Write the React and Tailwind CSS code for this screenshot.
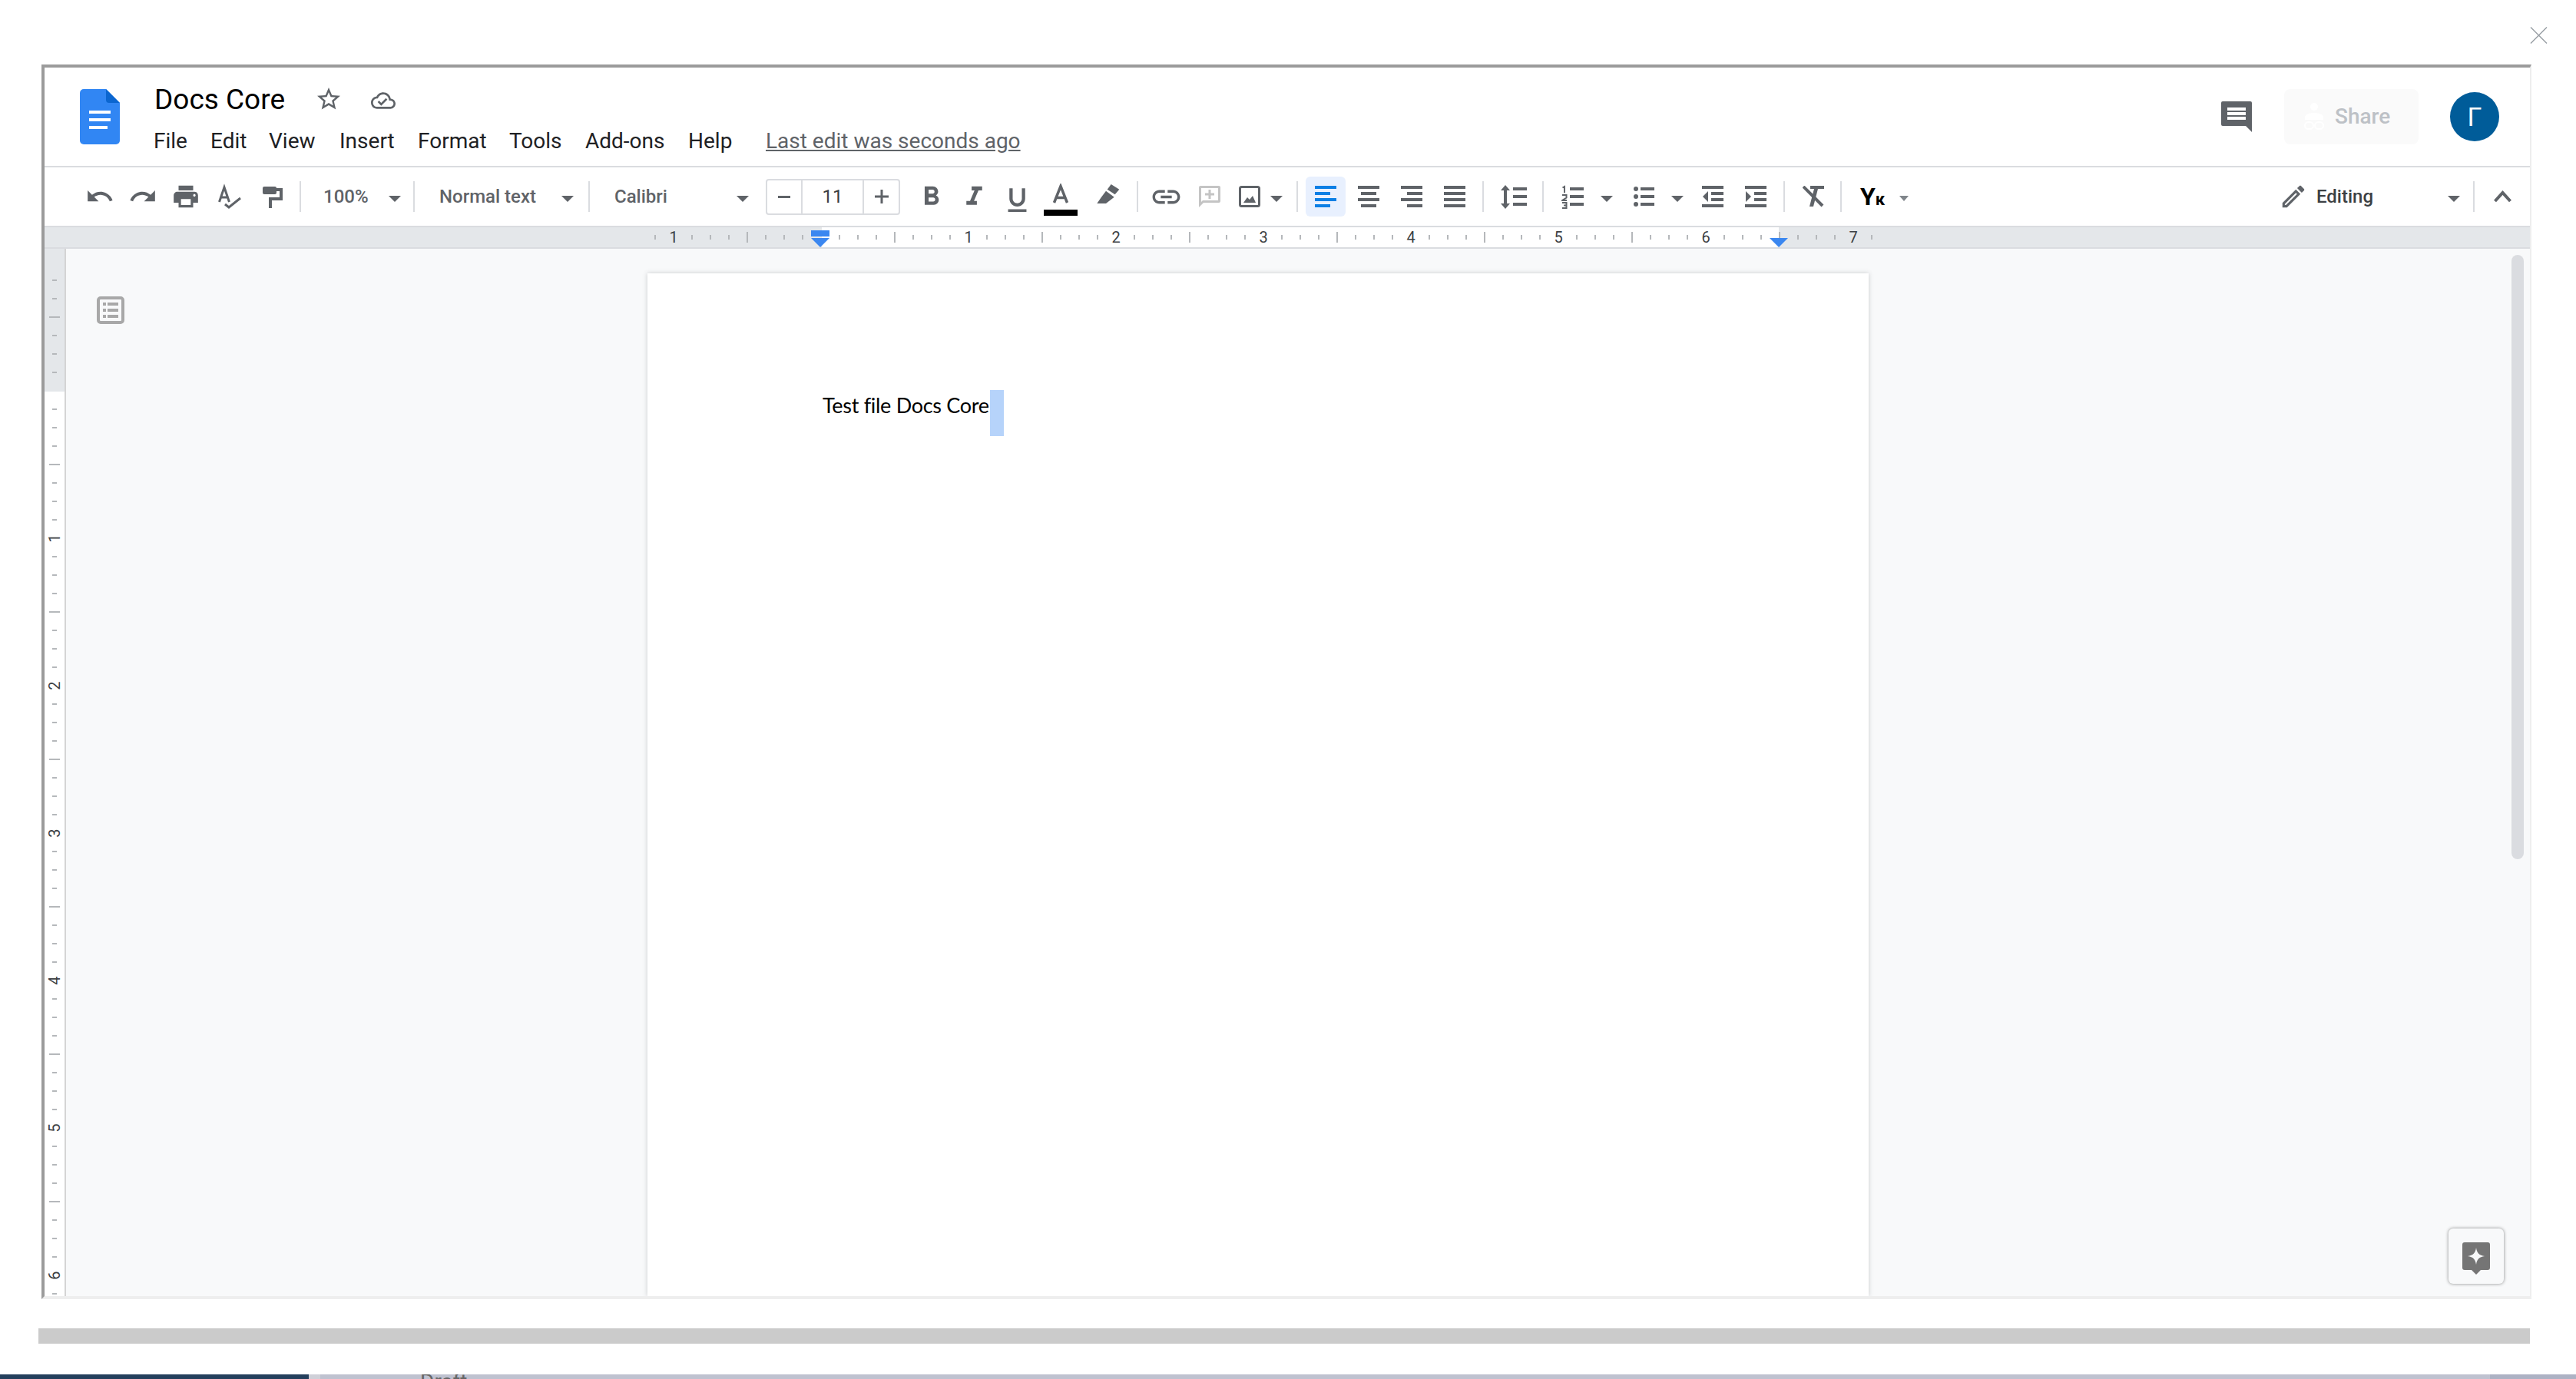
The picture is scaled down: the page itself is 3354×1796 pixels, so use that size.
import React from "react";

const GRAY = "#5f6368";

// generic filled icon, d comes from a 24 unit grid unless a box is given
const Icon = ({ d, size = 38, box = 24, color = GRAY, className = "" }) => (
  <svg width={size} height={size} viewBox={`0 0 ${box} ${box}`} className={`shrink-0 ${className}`}>
    <path d={d} fill={color} fillRule="evenodd" />
  </svg>
);

const Arrow = ({ className = "" }) => (
  <svg width="16" height="8" viewBox="0 0 16 8" className={`shrink-0 ${className}`}>
    <polygon points="0,0 16,0 8,8" fill={GRAY} />
  </svg>
);

const Sep = ({ className = "" }) => <div className={`w-[2px] h-[40px] bg-[#dadce0] shrink-0 ${className}`} />;

const Cell = ({ className = "", children }) => (
  <div className={`flex items-center justify-center shrink-0 ${className}`}>{children}</div>
);

const Combo = ({ label, className = "" }) => (
  <div className={`flex items-center justify-between shrink-0 text-[24px] font-medium text-[#5f6368] ${className}`}>
    <span>{label}</span>
    <Arrow className="mt-[5px]" />
  </div>
);

const AlignIcon = ({ rows, color = GRAY }) => (
  <svg width="28" height="28" viewBox="0 0 28 28">
    {rows.map((r, i) => (
      <rect key={i} x={r[0]} y={i * 8} width={r[1]} height="4" fill={color} />
    ))}
  </svg>
);

const IndentIcon = ({ more, className = "" }) => (
  <svg width="28" height="28" viewBox="0 0 28 28" className={`shrink-0 ${className}`}>
    <rect x="0" y="0" width="28" height="4" fill={GRAY} />
    <rect x="12" y="8" width="16" height="4" fill={GRAY} />
    <rect x="12" y="16" width="16" height="4" fill={GRAY} />
    <rect x="0" y="24" width="28" height="4" fill={GRAY} />
    <polygon points={more ? "1,7 1,21 8,14" : "8,7 8,21 1,14"} fill={GRAY} />
  </svg>
);

const menuItems = [
  ["File", "w-[74px]"],
  ["Edit", "w-[76px]"],
  ["View", "w-[92px]"],
  ["Insert", "w-[102px]"],
  ["Format", "w-[119px]"],
  ["Tools", "w-[99px]"],
  ["Add-ons", "w-[134px]"],
  ["Help", "w-[101px]"],
];

const Header = () => (
  <div className="flex h-[130px] shrink-0 border-b-2 border-[#dadce0] bg-white">
    <svg width="52" height="72" viewBox="0 0 52 72" className="ml-[46px] mt-[28px] shrink-0">
      <path d="M5 0H34L52 18V67a5 5 0 0 1-5 5H5a5 5 0 0 1-5-5V5a5 5 0 0 1 5-5Z" fill="#3186f3" />
      <path d="M34 0L52 18H38a4 4 0 0 1-4-4Z" fill="#0b66d0" />
      <rect x="12" y="28" width="28" height="4" fill="#fff" />
      <rect x="12" y="38" width="28" height="4" fill="#fff" />
      <rect x="12" y="48" width="24" height="4" fill="#fff" />
    </svg>
    <div className="ml-[44px] flex flex-col">
      <div className="flex items-center h-[40px] mt-[22px]">
        <span className="text-[37px] leading-[40px] text-black w-[209px] ml-[1px]">Docs Core</span>
        <Icon
          size={36}
          className="-mt-[2px]"
          d="M22 9.24l-7.19-.62L12 2 9.19 8.63 2 9.24l5.46 4.73L5.82 21 12 17.27 18.18 21l-1.63-7.03L22 9.24zM12 15.4l-3.76 2.27 1-4.28-3.32-2.88 4.38-.38L12 6.1l1.71 4.04 4.38.38-3.32 2.88 1 4.28L12 15.4z"
        />
        <Icon
          size={32}
          className="ml-[37px] mt-[2px]"
          d="M19.35 10.04C18.67 6.59 15.64 4 12 4 9.11 4 6.6 5.64 5.35 8.04 2.34 8.36 0 10.91 0 14c0 3.31 2.69 6 6 6h13c2.76 0 5-2.24 5-5 0-2.64-2.05-4.78-4.65-4.96zM19 18H6c-2.21 0-4-1.79-4-4 0-2.05 1.53-3.76 3.56-3.97l1.07-.11.5-.95C8.08 7.14 9.94 6 12 6c2.62 0 4.88 1.86 5.39 4.43l.3 1.5 1.53.11c1.56.1 2.78 1.41 2.78 2.96 0 1.65-1.35 3-3 3zm-9-3.82l-2.09-2.09L6.5 13.5 10 17l6.01-6.01-1.41-1.41z"
        />
      </div>
      <div className="flex items-center h-[36px] mt-[16px] text-[28px] leading-[36px] text-[#202124]">
        {menuItems.map(([name, width]) => (
          <span key={name} className={`${width} shrink-0`}>
            {name}
          </span>
        ))}
        <span className="underline text-[#5f6368] text-[28px]">Last edit was seconds ago</span>
      </div>
    </div>
    <div className="ml-auto flex items-start pr-[40px]">
      <svg width="40" height="40" viewBox="0 0 40 40" className="mt-[44px] shrink-0">
        <path d="M2 0H38a2 2 0 0 1 2 2V40L32 32H2a2 2 0 0 1-2-2V2a2 2 0 0 1 2-2Z" fill={GRAY} />
        <rect x="8" y="8" width="24" height="4" fill="#fff" />
        <rect x="8" y="14" width="24" height="4" fill="#fff" />
        <rect x="8" y="20" width="24" height="4" fill="#fff" />
      </svg>
      <div className="ml-[42px] mt-[28px] w-[175px] h-[72px] rounded-[8px] bg-[#fafafa] flex items-center">
        <svg width="28" height="36" viewBox="0 0 28 36" className="ml-[25px] shrink-0">
          <circle cx="14" cy="5" r="5" fill="#fff" />
          <path d="M2 22v-3c0-4 6-6 12-6s12 2 12 6v3Z" fill="#fff" />
          <rect x="2" y="25" width="11" height="9" rx="4.5" fill="none" stroke="#fff" strokeWidth="2" />
          <rect x="15" y="25" width="11" height="9" rx="4.5" fill="none" stroke="#fff" strokeWidth="2" />
        </svg>
        <span className="ml-[13px] text-[28px] font-medium text-[#bdc1c6]">Share</span>
      </div>
      <div className="ml-[41px] mt-[32px] w-[64px] h-[64px] rounded-full bg-[#005c99] flex items-center justify-center text-white text-[34px]">
        Г
      </div>
    </div>
  </div>
);

const Toolbar = () => (
  <div className="flex items-center h-[78px] shrink-0 border-b-2 border-[#dadce0] bg-white">
    <Cell className="w-[56px] ml-[44px]">
      <Icon d="M12.5 8c-2.65 0-5.05.99-6.9 2.6L2 7v9h9l-3.62-3.62c1.39-1.16 3.16-1.88 5.12-1.88 3.54 0 6.55 2.31 7.6 5.5l2.37-.78C21.08 11.03 17.15 8 12.5 8z" />
    </Cell>
    <Cell className="w-[56px]">
      <Icon d="M18.4 10.6C16.55 8.99 14.15 8 11.5 8c-4.65 0-8.58 3.03-9.96 7.22L3.9 16c1.05-3.19 4.05-5.5 7.6-5.5 1.95 0 3.73.72 5.12 1.88L13 16h9V7l-3.6 3.6z" />
    </Cell>
    <Cell className="w-[56px]">
      <Icon d="M19 8H5c-1.66 0-3 1.34-3 3v6h4v4h12v-4h4v-6c0-1.66-1.34-3-3-3zm-3 11H8v-5h8v5zm3-7c-.55 0-1-.45-1-1s.45-1 1-1 1 .45 1 1-.45 1-1 1zm-1-9H6v4h12V3z" />
    </Cell>
    <Cell className="w-[58px]">
      <svg width="40" height="40" viewBox="0 0 40 40">
        <path d="M6.5 27L13 8L19.5 27M9 21H17" fill="none" stroke={GRAY} strokeWidth="3" />
        <path d="M14 30L19 34L34 22" fill="none" stroke={GRAY} strokeWidth="3" />
      </svg>
    </Cell>
    <Cell className="w-[54px]">
      <svg width="40" height="40" viewBox="0 0 40 40">
        <rect x="7" y="7" width="18" height="10" rx="2" fill={GRAY} />
        <path d="M25 9H33V25H19V35H15V21H29V13H25Z" fill={GRAY} />
      </svg>
    </Cell>
    <Sep className="ml-[8px] mr-[8px]" />
    <Combo label="100%" className="w-[130px] pl-[21px] pr-[8px]" />
    <Sep className="ml-[8px] mr-[8px]" />
    <Combo label="Normal text" className="w-[210px] pl-[24px] pr-[11px]" />
    <Sep className="ml-[8px] mr-[8px]" />
    <Combo label="Calibri" className="w-[212px] pl-[24px] pr-[13px]" />
    <div className="ml-[9px] w-[175px] h-[47px] shrink-0 border-2 border-[#dadce0] rounded-[4px] flex items-center">
      <Cell className="w-[46px] h-full border-r-2 border-[#dadce0]">
        <div className="w-[16px] h-[3px] bg-[#5f6368]" />
      </Cell>
      <Cell className="w-[80px] h-full border-r-2 border-[#dadce0] text-[24px] text-[#3c4043]">11</Cell>
      <Cell className="flex-1 h-full">
        <svg width="18" height="18" viewBox="0 0 18 18">
          <path d="M7.5 0h3v7.5H18v3h-7.5V18h-3v-7.5H0v-3h7.5Z" fill={GRAY} />
        </svg>
      </Cell>
    </div>
    <Cell className="w-[56px] ml-[12px]">
      <Icon
        size={41}
        d="M15.6 10.79c.97-.67 1.65-1.77 1.65-2.79 0-2.26-1.75-4-4-4H7v14h7.04c2.09 0 3.71-1.7 3.71-3.79 0-1.52-.86-2.82-2.15-3.42zM10 6.5h3c.83 0 1.5.67 1.5 1.5s-.67 1.5-1.5 1.5h-3v-3zm3.5 9H10v-3h3.5c.83 0 1.5.67 1.5 1.5s-.67 1.5-1.5 1.5z"
      />
    </Cell>
    <Cell className="w-[56px]">
      <Icon size={41} d="M10 4v3h2.21l-3.42 8H6v3h8v-3h-2.21l3.42-8H18V4z" />
    </Cell>
    <Cell className="w-[56px]">
      <Icon
        size={41}
        className="mt-[8px]"
        d="M12 17c3.31 0 6-2.69 6-6V3h-2.5v8c0 1.93-1.57 3.5-3.5 3.5S8.5 12.93 8.5 11V3H6v8c0 3.31 2.69 6 6 6zm-7 2v2h14v-2H5z"
      />
    </Cell>
    <Cell className="w-[58px]">
      <svg width="44" height="44" viewBox="0 0 44 44" className="mt-[10px]">
        <path d="M13.5 25L22 3.5L30.5 25M16.5 18.5H27.5" fill="none" stroke={GRAY} strokeWidth="3.5" />
        <rect x="0" y="34" width="44" height="8" fill="#000" />
      </svg>
    </Cell>
    <Cell className="w-[66px]">
      <svg width="40" height="40" viewBox="0 0 40 40">
        <polygon points="23.7,4 34.3,10.7 28.7,17.3 18.7,10.7" fill={GRAY} />
        <polygon points="17,12.7 27.7,20.7 17,29 5.3,29 10.3,21.7" fill={GRAY} />
      </svg>
    </Cell>
    <Sep className="ml-[4px] mr-[4px]" />
    <Cell className="w-[64px]">
      <Icon
        size={43}
        d="M3.9 12c0-1.71 1.39-3.1 3.1-3.1h4V7H7c-2.76 0-5 2.24-5 5s2.24 5 5 5h4v-1.9H7c-1.71 0-3.1-1.39-3.1-3.1zM8 13h8v-2H8v2zm9-6h-4v1.9h4c1.71 0 3.1 1.39 3.1 3.1s-1.39 3.1-3.1 3.1h-4V17h4c2.76 0 5-2.24 5-5s-2.24-5-5-5z"
      />
    </Cell>
    <Cell className="w-[50px]">
      <svg width="28" height="28" viewBox="0 0 28 28">
        <path
          d="M2 0H26a2 2 0 0 1 2 2V20a2 2 0 0 1-2 2H6L0 28V2a2 2 0 0 1 2-2ZM3 3V21L5 19H25V3ZM12.5 5h3v4.5H20v3h-4.5V17h-3v-4.5H8v-3h4.5Z"
          fill="#c4c4c4"
          fillRule="evenodd"
        />
      </svg>
    </Cell>
    <Cell className="w-[54px]">
      <svg width="28" height="28" viewBox="0 0 28 28">
        <rect x="1.5" y="1.5" width="25" height="25" rx="2" fill="none" stroke={GRAY} strokeWidth="3" />
        <path d="M6 22L11 15L14 18L18 13L22 22Z" fill={GRAY} />
      </svg>
    </Cell>
    <Arrow className="mt-[5px]" />
    <Sep className="ml-[18px]" />
    <div className="ml-[10px] w-[52px] h-[52px] shrink-0 rounded-[6px] bg-[#e8f0fe] flex items-center justify-center">
      <AlignIcon color="#0b7fe5" rows={[[0, 28], [0, 20], [0, 28], [0, 20]]} />
    </div>
    <Cell className="w-[56px] ml-[2px]">
      <AlignIcon rows={[[0, 28], [4, 20], [0, 28], [4, 20]]} />
    </Cell>
    <Cell className="w-[56px]">
      <AlignIcon rows={[[0, 28], [8, 20], [0, 28], [8, 20]]} />
    </Cell>
    <Cell className="w-[56px]">
      <AlignIcon rows={[[0, 28], [0, 28], [0, 28], [0, 28]]} />
    </Cell>
    <Sep className="ml-[8px] mr-[8px]" />
    <svg width="36" height="32" viewBox="0 0 36 32" className="ml-[13px] shrink-0">
      <path d="M7 1L13 8H9V25H13L7 32L1 25H5V8H1Z" fill={GRAY} />
      <rect x="17" y="4" width="18" height="4" fill={GRAY} />
      <rect x="17" y="14" width="18" height="4" fill={GRAY} />
      <rect x="17" y="24" width="18" height="4" fill={GRAY} />
    </svg>
    <Sep className="ml-[19px]" />
    <svg width="30" height="32" viewBox="0 0 30 32" className="ml-[23px] shrink-0">
      <path d="M1.5 4.5L4 3V11" fill="none" stroke={GRAY} strokeWidth="2" />
      <path d="M1 14H6.5V17.5L1 21H7" fill="none" stroke={GRAY} strokeWidth="2" />
      <path d="M1 24H6.5V31H1M3 27.5H6" fill="none" stroke={GRAY} strokeWidth="2" />
      <rect x="11" y="4" width="18" height="4" fill={GRAY} />
      <rect x="11" y="14" width="18" height="4" fill={GRAY} />
      <rect x="11" y="24" width="18" height="4" fill={GRAY} />
    </svg>
    <Arrow className="ml-[21px] mt-[5px]" />
    <svg width="30" height="32" viewBox="0 0 30 32" className="ml-[25px] shrink-0">
      <circle cx="5" cy="6" r="3" fill={GRAY} />
      <circle cx="5" cy="16" r="3" fill={GRAY} />
      <circle cx="5" cy="26" r="3" fill={GRAY} />
      <rect x="11" y="4" width="18" height="4" fill={GRAY} />
      <rect x="11" y="14" width="18" height="4" fill={GRAY} />
      <rect x="11" y="24" width="18" height="4" fill={GRAY} />
    </svg>
    <Arrow className="ml-[21px] mt-[5px]" />
    <IndentIcon className="ml-[24px]" />
    <IndentIcon more className="ml-[28px]" />
    <Sep className="ml-[22px]" />
    <svg width="28" height="28" viewBox="0 0 28 28" className="ml-[23px] shrink-0">
      <path d="M10 0H28V4H10Z" fill={GRAY} />
      <path d="M15 4H20L14 27H9Z" fill={GRAY} />
      <path d="M1 1L26 26" stroke={GRAY} strokeWidth="4" fill="none" />
    </svg>
    <Sep className="ml-[21px]" />
    <span className="ml-[24px] w-[51px] shrink-0 mt-[4px] font-bold text-black text-[32px] leading-[32px]">
      Y<span className="text-[22px]">к</span>
    </span>
    <svg width="12" height="7" viewBox="0 0 12 7" className="mt-[5px] shrink-0">
      <polygon points="0,0 12,0 6,7" fill="#80868b" />
    </svg>
    <div className="ml-auto flex items-center pr-[24px]">
      <Icon
        d="M14.06 9.02l.92.92L5.92 19H5v-.92l9.06-9.06M17.66 3c-.25 0-.51.1-.7.29l-1.83 1.83 3.75 3.75 1.83-1.83c.39-.39.39-1.02 0-1.41l-2.34-2.34c-.2-.2-.45-.29-.71-.29zm-3.6 3.19L3 17.25V21h3.75L17.81 9.94l-3.75-3.75z"
      />
      <span className="ml-[11px] w-[171px] shrink-0 text-[24px] font-medium text-[#3c4043]">Editing</span>
      <Arrow className="mt-[5px]" />
      <Sep className="ml-[17px]" />
      <svg width="23" height="16" viewBox="0 0 23 16" className="ml-[25px] shrink-0">
        <path d="M1.5 14L11.5 3L21.5 14" fill="none" stroke={GRAY} strokeWidth="4" />
      </svg>
    </div>
  </div>
);

const Ruler = () => {
  const cells = [];
  for (let k = -9; k <= 57; k++) cells.push(k);
  return (
    <div className="relative flex h-[28px] shrink-0 border-b-2 border-[#dadce0] bg-[#e4e7ea]">
      <div className="w-[1012px] shrink-0" />
      <div className="w-[1246px] shrink-0 bg-white" />
      <div className="absolute inset-0 flex pl-[783px]">
        {cells.map((k) => (
          <div key={k} className="w-[24px] h-full shrink-0 flex items-center justify-center">
            {k === 0 ? null : k % 8 === 0 ? (
              <span className="text-[20px] text-[#3c4043]">{Math.abs(k / 8)}</span>
            ) : k % 4 === 0 ? (
              <div className="w-[2px] h-[14px] bg-[#b5b8bb]" />
            ) : (
              <div className="w-[2px] h-[6px] bg-[#b5b8bb]" />
            )}
          </div>
        ))}
      </div>
      <div className="absolute left-[998px] top-[4px] flex flex-col items-center">
        <div className="w-[24px] h-[8px] bg-[#3b87f0]" />
        <div className="mt-[2px] w-0 h-0 border-x-[12px] border-x-transparent border-t-[12px] border-t-[#3b87f0]" />
      </div>
      <div className="absolute left-[2246px] top-[14px] w-0 h-0 border-x-[12px] border-x-transparent border-t-[12px] border-t-[#3b87f0]" />
    </div>
  );
};

const SideRuler = () => {
  const cells = [];
  for (let i = -6; i <= 49; i++) cells.push(i);
  return (
    <div className="relative w-[28px] h-full shrink-0 border-r-2 border-[#d4d4d4] bg-white overflow-hidden">
      <div className="h-[186px] bg-[#e4e7ea]" />
      <div className="absolute inset-0 flex flex-col pt-[29px]">
        {cells.map((i) => (
          <div key={i} className="h-[24px] w-full shrink-0 flex items-center justify-center">
            {i === 0 ? null : i % 8 === 0 ? (
              <span className="text-[20px] text-[#3c4043] -rotate-90">{i / 8}</span>
            ) : i % 4 === 0 ? (
              <div className="w-[14px] h-[2px] bg-[#b5b8bb]" />
            ) : (
              <div className="w-[6px] h-[2px] bg-[#b5b8bb]" />
            )}
          </div>
        ))}
      </div>
    </div>
  );
};

const Editor = () => (
  <div className="relative flex flex-1 min-h-0 bg-[#f8f9fa] overflow-hidden">
    <SideRuler />
    <div className="w-[757px] shrink-0">
      <svg width="36" height="36" viewBox="0 0 36 36" className="ml-[40px] mt-[62px]">
        <rect x="2" y="2" width="32" height="32" rx="3" fill="none" stroke="#a8a8a8" strokeWidth="4" />
        <rect x="8" y="8" width="4" height="4" fill="#a8a8a8" />
        <rect x="14" y="8" width="14" height="4" fill="#a8a8a8" />
        <rect x="8" y="16" width="4" height="4" fill="#a8a8a8" />
        <rect x="14" y="16" width="14" height="4" fill="#a8a8a8" />
        <rect x="8" y="24" width="4" height="4" fill="#a8a8a8" />
        <rect x="14" y="24" width="14" height="4" fill="#a8a8a8" />
      </svg>
    </div>
    <div className="mt-[32px] w-[1590px] shrink-0 bg-white shadow-[0_0_6px_rgba(60,64,67,0.25)] pl-[228px] pt-[152px]">
      <div className="flex items-start h-[60px]">
        <span className="font-['Lato',sans-serif] text-[27px] tracking-[-0.3px] leading-[40px] text-black">Test file Docs Core</span>
        <div className="ml-[1px] w-[18px] h-[60px] bg-[#b6d3fa]" />
      </div>
    </div>
    <div className="absolute right-[8px] top-[8px] w-[16px] h-[787px] rounded-full bg-[#dadce0]" />
    <div className="absolute right-[34px] bottom-[16px] w-[72px] h-[72px] rounded-[6px] bg-[#f8f9fa] shadow-[0_0_4px_rgba(0,0,0,0.45)] flex items-center justify-center">
      <svg width="36" height="42" viewBox="0 0 36 42" className="mt-[6px]">
        <path
          d="M3 0H33a3 3 0 0 1 3 3V33a3 3 0 0 1-3 3H24L18 42L12 36H3a3 3 0 0 1-3-3V3a3 3 0 0 1 3-3ZM18 7C19 14 22 17 29 18C22 19 19 22 18 29C17 22 14 19 7 18C14 17 17 14 18 7Z"
          fill="#757575"
          fillRule="evenodd"
        />
      </svg>
    </div>
  </div>
);

const App = () => (
  <div className="w-[3354px] h-[1796px] bg-white flex flex-col overflow-hidden font-['Roboto',sans-serif]">
    <div className="h-[84px] shrink-0 flex justify-end items-start pr-[37px] pt-[35px]">
      <svg width="23" height="22" viewBox="0 0 23 22">
        <path d="M1 0.5L22 21.5M22 0.5L1 21.5" stroke="#9aa0a6" strokeWidth="1.5" fill="none" />
      </svg>
    </div>
    <div className="ml-[54px] w-[3242px] h-[1608px] shrink-0 flex flex-col border-t-4 border-l-4 border-r-2 border-b-4 border-t-[#9b9b9b] border-l-[#9b9b9b] border-r-[#eeeeee] border-b-[#eeeeee]">
      <Header />
      <Toolbar />
      <Ruler />
      <Editor />
    </div>
    <div className="ml-[50px] mt-[38px] w-[3244px] h-[20px] shrink-0 bg-[#cbcbcb]" />
    <div className="mt-[40px] h-[6px] shrink-0 flex overflow-hidden">
      <div className="w-[402px] bg-[#243f5c]" />
      <div className="w-[15px] bg-[#cfd0d8]" />
      <div className="flex-1 bg-[#bfc2d0] pl-[130px] text-[28px] leading-[20px] text-[#666]">Draft</div>
      <div className="w-[112px] bg-[#adb2c4]" />
    </div>
  </div>
);

export default App;
